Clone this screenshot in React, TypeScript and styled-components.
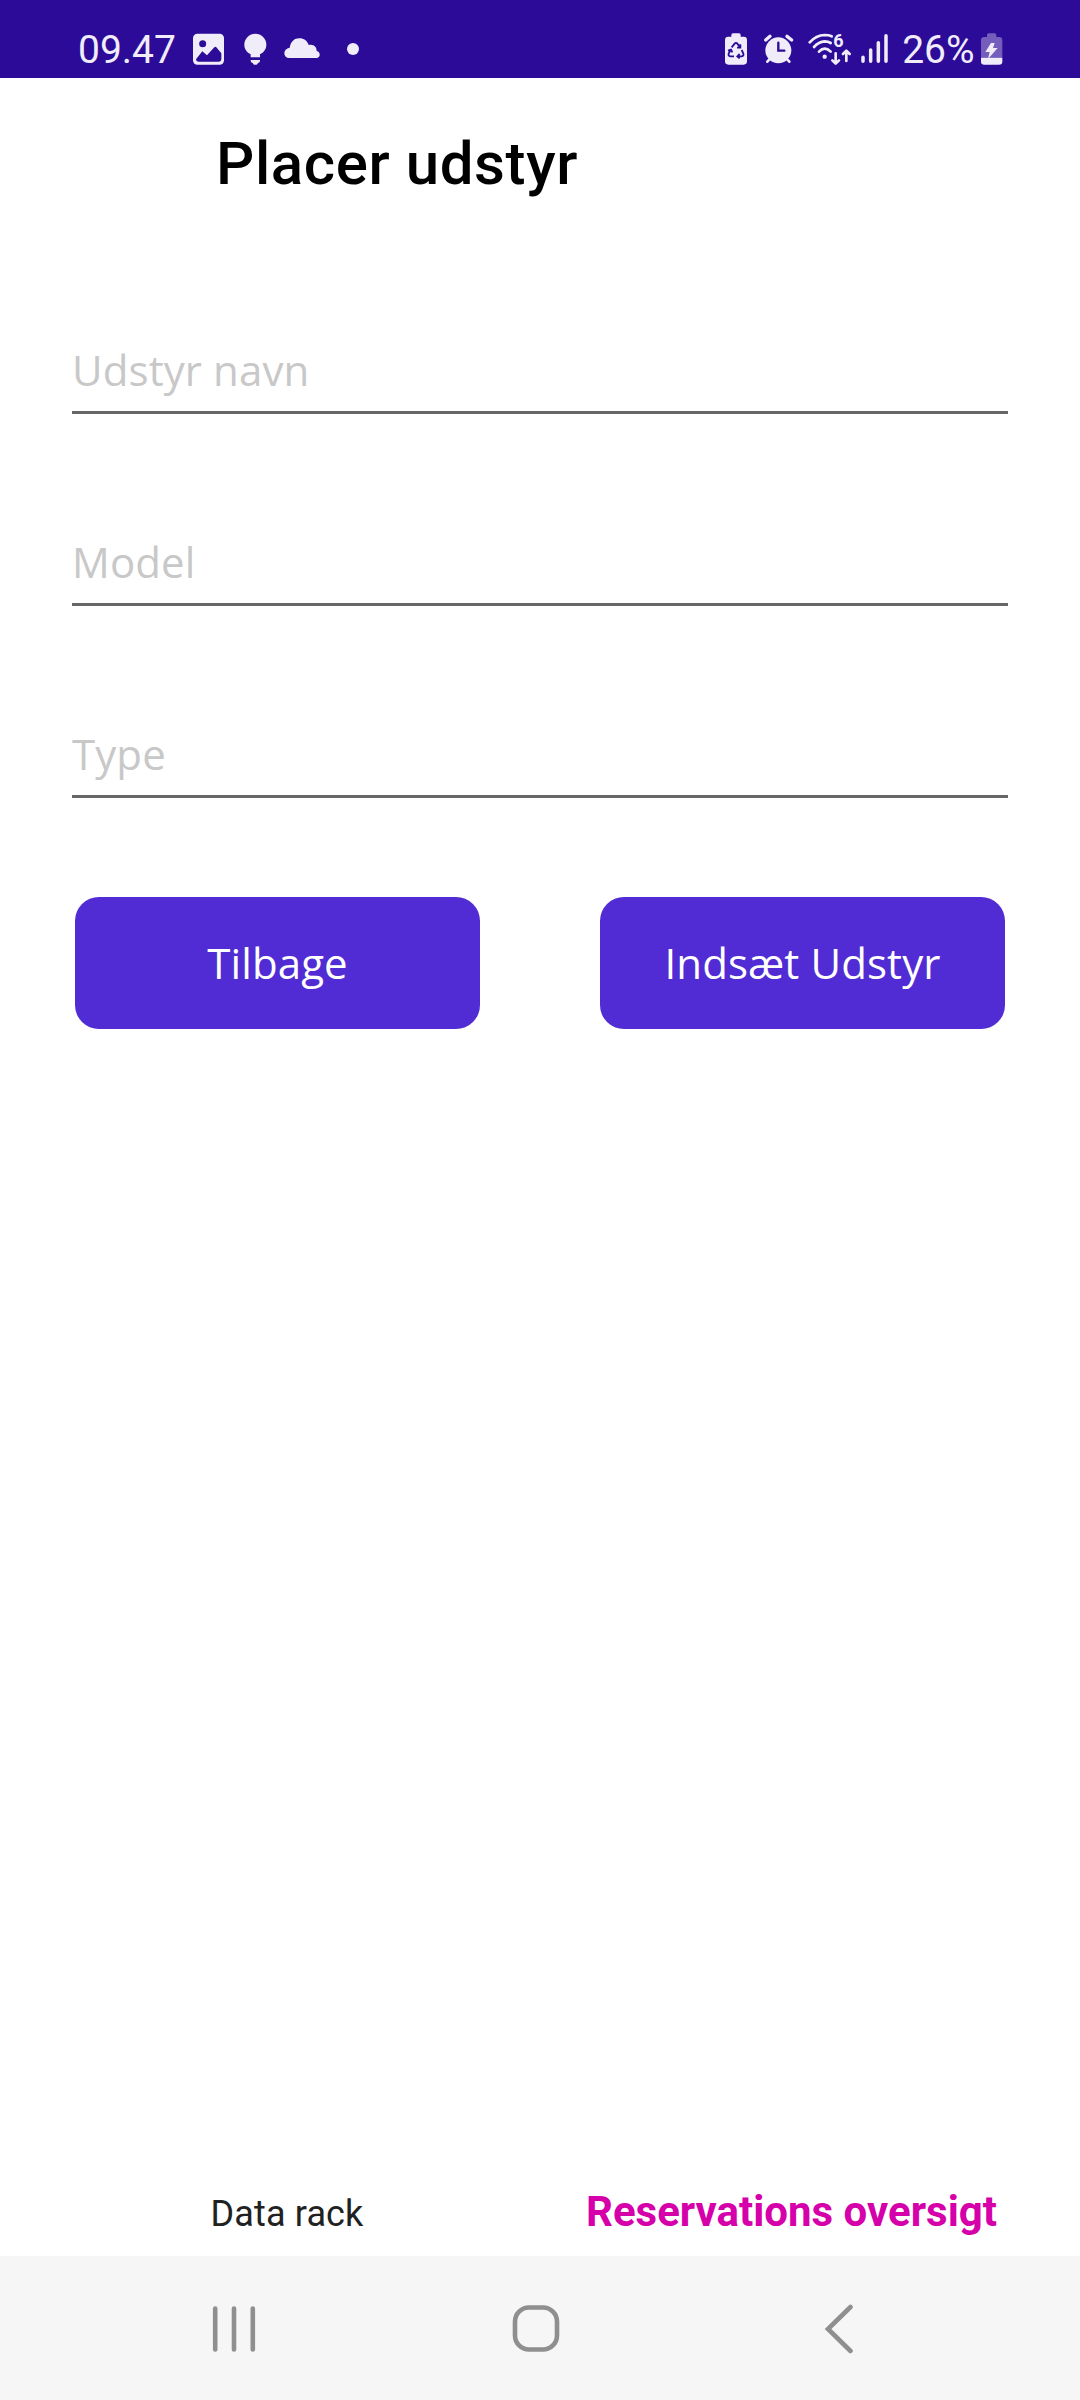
import React from "react";
import styled, { createGlobalStyle } from "styled-components";

const BAR = "#2b0b98";
const TINT = "#f0ecfa";
const NAV = "#8f8f8f";

const GlobalStyle = createGlobalStyle`
  * { box-sizing: border-box; }
  body { margin: 0; background: #fff; }
`;

const Screen = styled.div`
  width: 1080px;
  height: 2400px;
  display: flex;
  flex-direction: column;
  background: #fff;
  font-family: Roboto, sans-serif;
`;

const StatusBar = styled.header`
  height: 78px;
  padding: 20px 77.5px 0 78px;
  display: flex;
  justify-content: space-between;
  background: ${BAR};
  color: ${TINT};
`;

const StatusGroup = styled.div`
  height: 58px;
  display: flex;
  align-items: center;
`;

const StatusText = styled.span<{ $width: number; $gap?: number }>`
  width: ${(p) => p.$width}px;
  margin-left: ${(p) => p.$gap ?? 0}px;
  font-size: 39px;
  line-height: 60px;
  height: 58px;
  white-space: nowrap;
`;

const StatusIcon = styled.svg<{ $gap: number }>`
  flex: none;
  display: block;
  overflow: visible;
  margin-left: ${(p) => p.$gap}px;
`;

const Title = styled.h1`
  margin: 0;
  padding: 46px 0 0 216px;
  height: 168px;
  font-size: 60px;
  line-height: 80px;
  font-weight: 500;
  letter-spacing: 0.6px;
  color: #000;
`;

const Form = styled.main`
  flex: 1;
  padding: 0 72px;
  font-family: "Open Sans", sans-serif;
`;

const Field = styled.input`
  display: block;
  width: 100%;
  height: 84px;
  margin: 84px 0 108px;
  padding: 0 0 3px;
  border: 0;
  border-bottom: 3px solid #666;
  border-radius: 0;
  background: transparent;
  outline: none;
  font-family: inherit;
  font-size: 42px;
  letter-spacing: 0.1px;
  color: #000;

  &::placeholder {
    color: #c8c8c8;
    opacity: 1;
  }
`;

const Buttons = styled.div`
  display: flex;
  justify-content: space-between;
  padding: 0 3px;
  margin-top: -9px;
`;

const Button = styled.button`
  width: 405px;
  height: 132px;
  padding: 0 0 2px;
  border: 0;
  border-radius: 24px;
  background: #512bd4;
  color: #fff;
  font-family: inherit;
  font-size: 42px;
  letter-spacing: 0.1px;
`;

const Tabs = styled.nav`
  height: 84px;
  display: flex;
  align-items: baseline;
`;

const Tab = styled.a<{ $active?: boolean }>`
  width: 540px;
  text-align: center;
  white-space: nowrap;
  line-height: 80px;
  font-size: ${(p) => (p.$active ? 42 : 36)}px;
  font-weight: ${(p) => (p.$active ? 700 : 400)};
  color: ${(p) => (p.$active ? "#d600aa" : "#212121")};
  letter-spacing: ${(p) => (p.$active ? 0 : 0.15)}px;
  padding: ${(p) => (p.$active ? "0 37px 0 0" : "0 0 0 34px")};
`;

const SystemNav = styled.footer`
  height: 144px;
  padding: 0 226px 0 210px;
  display: flex;
  align-items: center;
  background: #f6f6f6;
`;

const NavIcon = styled.svg<{ $gap?: number }>`
  display: block;
  flex: none;
  margin-left: ${(p) => p.$gap ?? 0}px;
  fill: none;
  stroke: ${NAV};
  stroke-width: 4.6;
  stroke-linecap: round;
`;

function Icon({ w, gap, children }: { w: number; gap: number; children: React.ReactNode }) {
  return (
    <StatusIcon $gap={gap} width={w / 3} height={32} viewBox={`0 0 ${w} 96`} fill={TINT}>
      {children}
    </StatusIcon>
  );
}

export default function App() {
  return (
    <>
      <GlobalStyle />
      <Screen>
        <StatusBar>
          <StatusGroup>
            <StatusText $width={98}>09.47</StatusText>
            <Icon w={93} gap={17}>
              <rect y="2" width="93" height="93" rx="13" />
              <circle cx="29" cy="32" r="10.5" fill={BAR} />
              <path d="M9 79 L28 55 L42 67 L64 43 Q67 40 70 43 L85 61 V79 Q85 86 78 86 H16 Q9 86 9 79Z" fill={BAR} />
            </Icon>
            <Icon w={68} gap={20}>
              <path d="M34 2a33 33 0 0 1 33 33c0 14-8 23-19 29v9H20v-9C9 58 1 49 1 35A33 33 0 0 1 34 2Z" />
              <path d="M20 81h28v3q0 4-6 6-2 5-5 5h-6q-3 0-5-5-6-2-6-6Z" />
            </Icon>
            <Icon w={108} gap={17.3}>
              <path d="M16 75C-4 75-4 46 17 44C20 26 31 16 46 16C60 16 70 24 74 36C88 32 99 42 98 54C111 57 110 75 97 75Z" />
            </Icon>
            <Icon w={36} gap={27}>
              <circle cx="18" cy="48" r="18" />
            </Icon>
          </StatusGroup>
          <StatusGroup>
            <Icon w={66} gap={0}>
              <rect x="19" y="1" width="28" height="18" rx="5" />
              <rect y="11" width="66" height="84" rx="10" />
              <g fill="none" stroke={BAR} strokeWidth="5.5">
                <path d="M20 43 L29 32 Q33 27 37 32 L45 43 M36 44 H46 V34" />
                <path d="M17 51 L11 62 Q9 69 16 70 H27 M9 53 L18 50 L22 58" />
                <path d="M50 51 L55 62 Q57 69 50 70 H38 M44 63 L37 70 L44 76" />
              </g>
            </Icon>
            <Icon w={88} gap={17}>
              <circle cx="43" cy="52" r="39" />
              <path d="M5 21 18 10M69 10 83 21" stroke={TINT} strokeWidth="10" strokeLinecap="round" />
              <path d="M10 86 19 76M76 86 67 76" stroke={TINT} strokeWidth="8" strokeLinecap="round" />
              <path d="M43 29V53H61" fill="none" stroke={BAR} strokeWidth="7" strokeLinecap="round" />
            </Icon>
            <Icon w={130} gap={15}>
              <circle cx="50" cy="71" r="6.5" />
              <g fill="none" stroke={TINT} strokeWidth="8" strokeLinecap="round" strokeLinejoin="round">
                <path d="M5 28Q24 7 50 6Q62 6 71 10" />
                <path d="M18 42Q32 26 50 25Q60 25 68 30" />
                <path d="M33 56Q50 38 68 56" />
                <path d="M83 61V91M73 82 83 92 93 82" />
                <path d="M115 84V54M105 63 115 53 125 63" />
              </g>
              <text x="76" y="43" fontSize="54" fontWeight="700" fontFamily="Roboto, sans-serif">6</text>
            </Icon>
            <Icon w={82} gap={10}>
              <path d="M6 73V85M29 51V85M52 29V85M75 8V85" stroke={TINT} strokeWidth="10.5" strokeLinecap="round" />
            </Icon>
            <StatusText $width={73} $gap={13.5}>26%</StatusText>
            <Icon w={64} gap={6}>
              <path d="M18 12V6q0-5 5-5h18q5 0 5 5v6h8q10 0 10 10V74H0V22Q0 12 10 12Z" fill="#755dbc" />
              <path d="M0 74H64V86Q64 95 54 95H10Q0 95 0 86Z" />
              <path d="M30 30H41L36 45H50L21 78L26 57H13Z" />
            </Icon>
          </StatusGroup>
        </StatusBar>
        <Title>Placer udstyr</Title>
        <Form>
          <Field placeholder="Udstyr navn" />
          <Field placeholder="Model" />
          <Field placeholder="Type" />
          <Buttons>
            <Button>Tilbage</Button>
            <Button>Indsæt Udstyr</Button>
          </Buttons>
        </Form>
        <Tabs>
          <Tab>Data rack</Tab>
          <Tab $active>Reservations oversigt</Tab>
        </Tabs>
        <SystemNav>
          <NavIcon width="48" height="52" viewBox="0 0 48 52">
            <path d="M5.2 6.5V47.5M24 6.5V47.5M42.8 6.5V47.5" />
          </NavIcon>
          <NavIcon $gap={252} width="52" height="52" viewBox="0 0 52 52">
            <rect x="5" y="5.5" width="42" height="42" rx="14" />
          </NavIcon>
          <NavIcon $gap={260} width="32" height="52" viewBox="0 0 32 52">
            <path d="M28.5 5 6 27 28.5 49" />
          </NavIcon>
        </SystemNav>
      </Screen>
    </>
  );
}
